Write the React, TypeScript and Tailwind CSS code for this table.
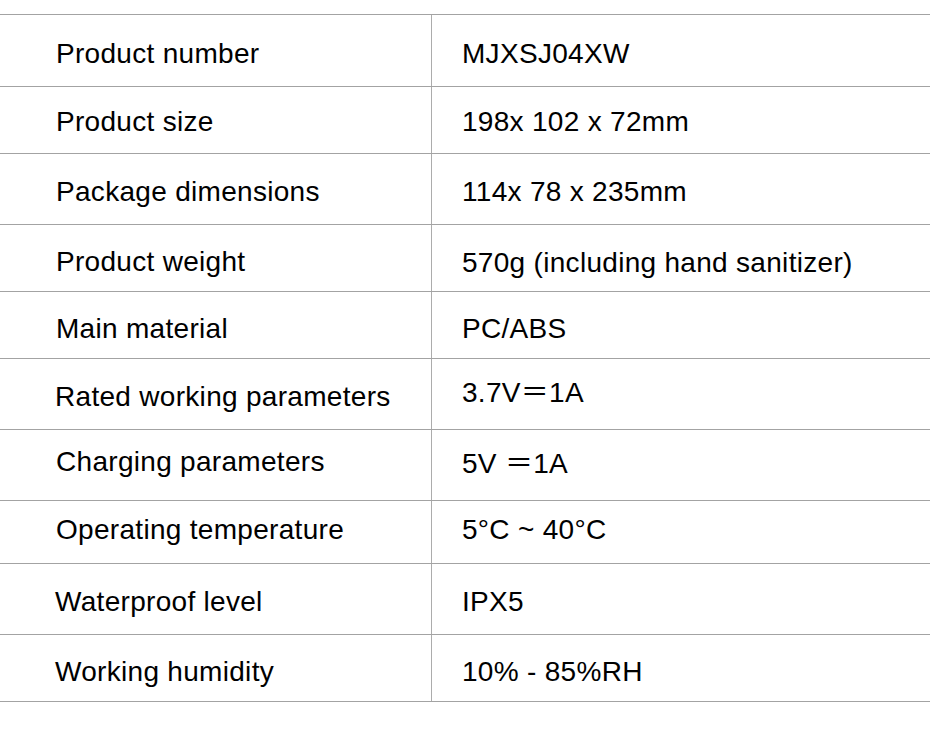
const rows = [
  { label: 'Product number', value: 'MJXSJ04XW', h: 'h-[72px]', lp: 'pt-[25px]', vp: 'pt-[25px]' },
  { label: 'Product size', value: '198x 102 x 72mm', h: 'h-[67px]', lp: 'pt-[21px]', vp: 'pt-[21px]' },
  { label: 'Package dimensions', value: '114x 78 x 235mm', h: 'h-[71px]', lp: 'pt-[24px]', vp: 'pt-[24px]' },
  { label: 'Product weight', value: '570g (including hand sanitizer)', h: 'h-[67px]', lp: 'pt-[23px]', vp: 'pt-[24px]' },
  { label: 'Main material', value: 'PC/ABS', h: 'h-[67px]', lp: 'pt-[23px]', vp: 'pt-[23px]' },
  { label: 'Rated working parameters', value: '3.7V＝1A', h: 'h-[71px]', lp: 'pt-[24px]', vp: 'pt-[20px]', shift: true },
  { label: 'Charging parameters', value: '5V ＝1A', h: 'h-[71px]', lp: 'pt-[18px]', vp: 'pt-[20px]' },
  { label: 'Operating temperature', value: '5°C ~ 40°C', h: 'h-[63px]', lp: 'pt-[15px]', vp: 'pt-[15px]' },
  { label: 'Waterproof level', value: 'IPX5', h: 'h-[71px]', lp: 'pt-[24px]', vp: 'pt-[24px]', shift: true },
  { label: 'Working humidity', value: '10% - 85%RH', h: 'h-[68px] border-b', lp: 'pt-[23px]', vp: 'pt-[23px]', shift: true },
]

export default function App() {
  return (
    <div
      className="w-[930px] h-[732px] bg-white pt-[14px] text-[28px] leading-[28px] tracking-[0.3px] text-black"
      style={{ fontFamily: '"Liberation Sans", Arial, "Noto Sans CJK SC", sans-serif' }}
    >
      {rows.map((r) => (
        <div key={r.label} className={`flex border-t border-[#a3a3a3] ${r.h}`}>
          <div className={`w-[431px] shrink-0 ${r.shift ? 'pl-[55px]' : 'pl-[56px]'} ${r.lp}`}>
            {r.label}
          </div>
          <div className={`flex-1 border-l border-[#acacac] pl-[30px] ${r.vp}`}>
            {r.value}
          </div>
        </div>
      ))}
    </div>
  )
}
